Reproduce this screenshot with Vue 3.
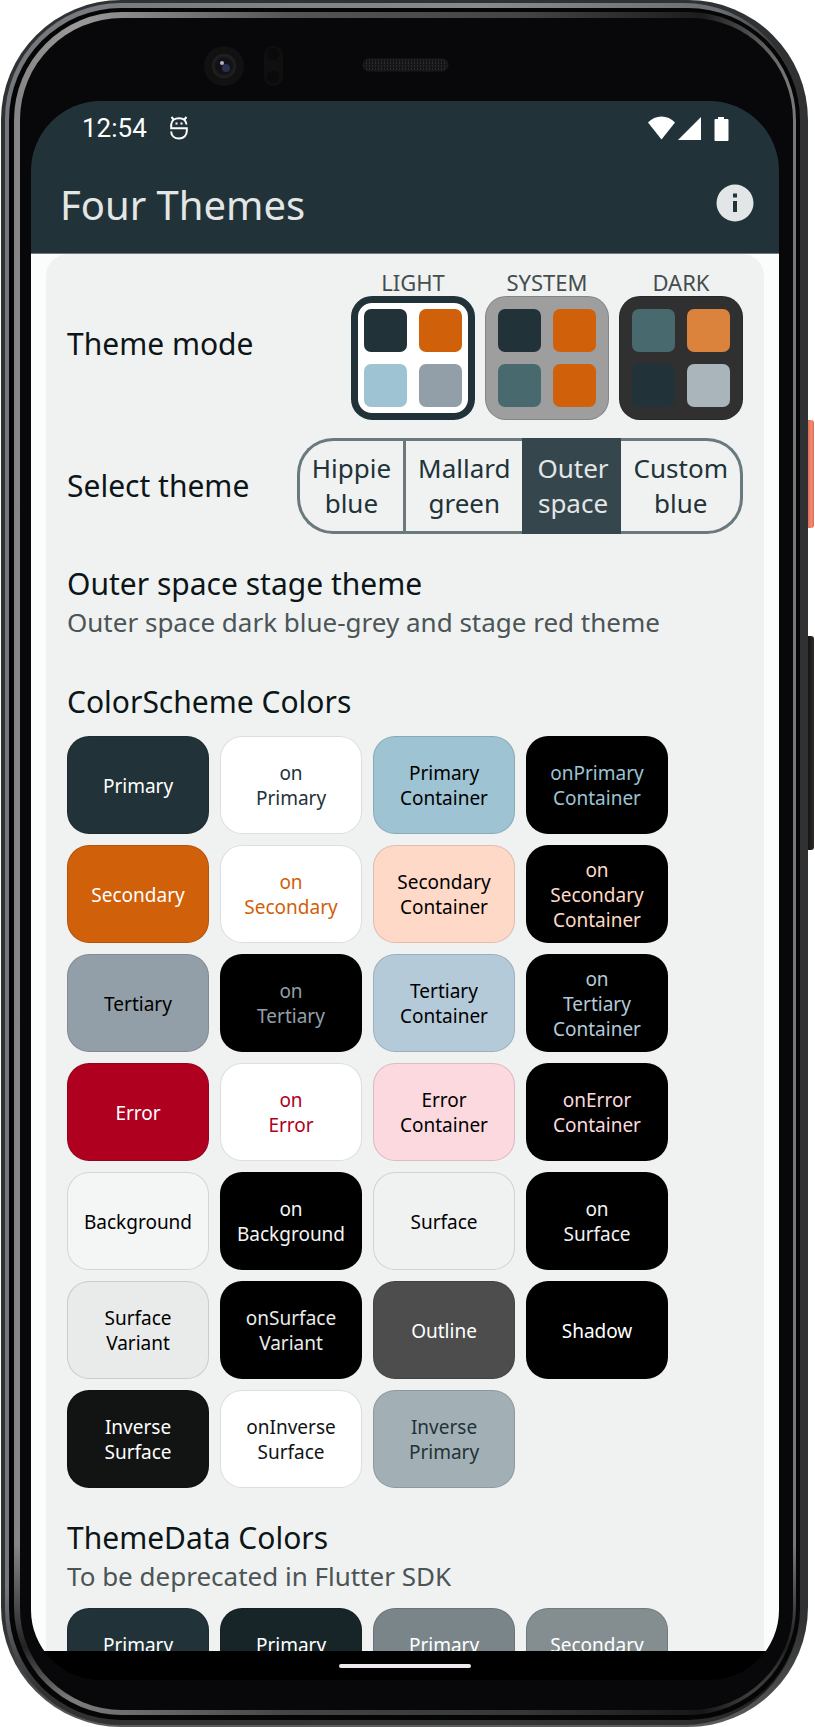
<script setup>
import { ref } from 'vue'

const modes = [
  { id: 'light', label: 'LIGHT', swatches: ['#213338', '#d0600a', '#9ec3d3', '#939fa8'] },
  { id: 'system', label: 'SYSTEM', swatches: ['#213338', '#d0600a', '#486a6f', '#d0600a'] },
  { id: 'dark', label: 'DARK', swatches: ['#486a6f', '#db823d', '#213338', '#a9b4bb'] }
]
const mode = ref('light')

const themes = [
  ['Hippie', 'blue'],
  ['Mallard', 'green'],
  ['Outer', 'space'],
  ['Custom', 'blue']
]
const theme = ref(2)

const schemeColors = [
  { lines: ['Primary'], bg: '#213338', fg: '#ffffff' },
  { lines: ['on', 'Primary'], bg: '#ffffff', fg: '#213338' },
  { lines: ['Primary', 'Container'], bg: '#9ec3d3', fg: '#000000' },
  { lines: ['onPrimary', 'Container'], bg: '#000000', fg: '#9ec3d3' },
  { lines: ['Secondary'], bg: '#d0600a', fg: '#ffffff' },
  { lines: ['on', 'Secondary'], bg: '#ffffff', fg: '#d0600a' },
  { lines: ['Secondary', 'Container'], bg: '#ffd9c7', fg: '#000000' },
  { lines: ['on', 'Secondary', 'Container'], bg: '#000000', fg: '#ffd9c7' },
  { lines: ['Tertiary'], bg: '#939fa8', fg: '#000000' },
  { lines: ['on', 'Tertiary'], bg: '#000000', fg: '#939fa8' },
  { lines: ['Tertiary', 'Container'], bg: '#b4cad8', fg: '#000000' },
  { lines: ['on', 'Tertiary', 'Container'], bg: '#000000', fg: '#b4cad8' },
  { lines: ['Error'], bg: '#b00020', fg: '#ffffff' },
  { lines: ['on', 'Error'], bg: '#ffffff', fg: '#b00020' },
  { lines: ['Error', 'Container'], bg: '#fcd8df', fg: '#000000' },
  { lines: ['onError', 'Container'], bg: '#000000', fg: '#fcd8df' },
  { lines: ['Background'], bg: '#f4f6f5', fg: '#000000' },
  { lines: ['on', 'Background'], bg: '#000000', fg: '#f4f6f5' },
  { lines: ['Surface'], bg: '#f0f2f1', fg: '#000000' },
  { lines: ['on', 'Surface'], bg: '#000000', fg: '#f0f2f1' },
  { lines: ['Surface', 'Variant'], bg: '#e9ebea', fg: '#000000' },
  { lines: ['onSurface', 'Variant'], bg: '#000000', fg: '#e9ebea' },
  { lines: ['Outline'], bg: '#4d4d4d', fg: '#ffffff' },
  { lines: ['Shadow'], bg: '#000000', fg: '#ffffff' },
  { lines: ['Inverse', 'Surface'], bg: '#111413', fg: '#ffffff' },
  { lines: ['onInverse', 'Surface'], bg: '#ffffff', fg: '#111413' },
  { lines: ['Inverse', 'Primary'], bg: '#a2b0b5', fg: '#213338' }
]

const themeDataColors = [
  { lines: ['Primary', 'Color'], bg: '#213338', fg: '#ffffff' },
  { lines: ['Primary', 'Dark'], bg: '#172428', fg: '#ffffff' },
  { lines: ['Primary', 'Light'], bg: '#7a858a', fg: '#ffffff' },
  { lines: ['Secondary', 'Header'], bg: '#848e90', fg: '#ffffff' }
]
</script>

<template>
  <div class="device">
    <div class="side-key power"></div>
    <div class="side-key volume"></div>
    <div class="shell"><div class="rim"><div class="groove"><div class="ring"><div class="glass">
      <div class="sensors">
        <svg width="250" height="48" viewBox="0 0 250 48" aria-hidden="true">
          <defs>
            <radialGradient id="lens"><stop offset="0" stop-color="#10101a" /><stop offset=".6" stop-color="#111116" /><stop offset="1" stop-color="#242424" /></radialGradient>
            <pattern id="mesh" width="3" height="3" patternUnits="userSpaceOnUse"><rect width="3" height="3" fill="#151515" /><path d="M0 0h1v2h-1z" fill="#2c2c2c" /></pattern>
          </defs>
          <circle cx="20" cy="25" r="20" fill="#111112" />
          <circle cx="20" cy="25" r="12" fill="url(#lens)" />
          <circle cx="22" cy="27" r="4" fill="#29304e" />
          <circle cx="18" cy="22" r="2" fill="#b5b5bd" />
          <rect x="60" y="5" width="19" height="40" rx="9" fill="#0f0f10" />
          <circle cx="69" cy="13" r="7" fill="#0a0a0b" stroke="#121213" />
          <circle cx="69" cy="36" r="7" fill="#0a0a0b" stroke="#121213" />
          <rect x="159" y="18" width="85" height="12" rx="6" fill="url(#mesh)" stroke="#1a1a1a" />
        </svg>
      </div>

      <div class="screen">
        <header class="top">
          <div class="status">
            <span class="clock">12:54</span>
            <svg class="debug" width="18" height="24" viewBox="0 0 18 24" aria-hidden="true" fill="none" stroke="#fff" stroke-width="2">
              <path d="M16.500 8.500C16 4.500 13 2.200 9 2.200S1.500 4.500 1.200 8.500V12.200H16.800V15c0 4.500-3.300 7.500-7.800 7.500S1.200 19.700 1.200 15.500" />
              <path d="M1.500 1l2.500 3M16.500 1L14 4" />
              <path d="M5.500 7.500h2M10.500 7.500h2" />
            </svg>
            <span class="grow"></span>
            <svg class="signals" width="81" height="25" viewBox="0 0 81 25" aria-hidden="true" fill="#fff">
              <path d="M0 6.500C7-1.500 20-1.500 27 6.500L13.500 23.500z" />
              <path d="M53 1v23H30z" />
              <path d="M70 1h6v2h3.500q1 0 1 1v20q0 1-1 1h-12q-1 0-1-1V4q0-1 1-1H70z" />
            </svg>
          </div>
          <div class="appbar">
            <h1>Four Themes</h1>
            <button class="info" type="button" aria-label="About">
              <svg width="38" height="38" viewBox="0 0 38 38" aria-hidden="true">
                <circle cx="19" cy="19" r="18.500" fill="#e3e6e7" />
                <path d="M17 9.500h4v4h-4zM17 17h4v11h-4z" fill="#213338" />
              </svg>
            </button>
          </div>
        </header>

        <main class="body">
          <section class="card">
            <div class="row mode-row">
              <h2>Theme mode</h2>
              <div class="modes">
                <div v-for="m in modes" :key="m.id" class="mode">
                  <label :for="'mode-' + m.id">{{ m.label }}</label>
                  <button
                    :id="'mode-' + m.id"
                    type="button"
                    :class="['mode-box', m.id, { selected: mode === m.id }]"
                    :aria-pressed="mode === m.id"
                    @click="mode = m.id"
                  >
                    <span v-for="(c, i) in m.swatches" :key="i" class="swatch" :style="{ background: c }"></span>
                  </button>
                </div>
              </div>
            </div>

            <div class="row theme-row">
              <h2>Select theme</h2>
              <div class="segments">
                <button
                  v-for="(t, i) in themes"
                  :key="i"
                  type="button"
                  :class="{ active: theme === i }"
                  :aria-pressed="theme === i"
                  @click="theme = i"
                >{{ t[0] }}<br />{{ t[1] }}</button>
              </div>
            </div>

            <div class="heading">
              <h2>Outer space stage theme</h2>
              <p>Outer space dark blue-grey and stage red theme</p>
            </div>

            <h2 class="section-title">ColorScheme Colors</h2>
            <div class="tiles">
              <div v-for="(c, i) in schemeColors" :key="i" class="tile" :style="{ background: c.bg, color: c.fg }">
                <span v-for="(l, j) in c.lines" :key="j">{{ l }}</span>
              </div>
            </div>

            <div class="heading data-heading">
              <h2>ThemeData Colors</h2>
              <p>To be deprecated in Flutter SDK</p>
            </div>
            <div class="tiles">
              <div v-for="(c, i) in themeDataColors" :key="i" class="tile" :style="{ background: c.bg, color: c.fg }">
                <span v-for="(l, j) in c.lines" :key="j">{{ l }}</span>
              </div>
            </div>
          </section>
        </main>

        <footer class="nav"><span class="pill"></span></footer>
      </div>
    </div></div></div></div></div>
  </div>
</template>

<style>
html, body { background: #fff; }
</style>

<style scoped>
* { box-sizing: border-box; }
h1, h2, p { margin: 0; font-weight: 400; }
button { font: inherit; color: inherit; margin: 0; cursor: pointer; }
.device {
  position: relative;
  display: flex;
  height: 100vh;
  padding: 0 7px 0 1px;
  font-family: "Noto Sans", "Open Sans", sans-serif;
}
.side-key { position: absolute; right: 1px; width: 8px; }
.power { top: 420px; height: 108px; border-radius: 0 3px 3px 0; background: linear-gradient(90deg, #d95f47, #f58a72 70%, #d96a55); }
.volume { top: 636px; height: 214px; border-radius: 0 3px 3px 0; background: linear-gradient(90deg, #0d0d0d, #2d2b2a); }
.shell, .rim, .groove, .ring, .glass { display: flex; flex: 1; min-width: 0; min-height: 0; }
.shell {
  position: relative;
  padding: 3px 8px 2px 4px;
  border-radius: 120px;
  background: linear-gradient(180deg, #2f3132 94%, #5c5c5c);
}
.rim {
  padding: 5px 0 5px 4px;
  border-radius: 116px;
  background:
    linear-gradient(180deg, transparent 92%, rgba(0, 0, 0, 0.6) 98%),
    linear-gradient(90deg, #74777c, #858b8f 60%, #6a6e71 90%, #2a2c2d);
}
.groove { padding: 4px 4px 5px 5px; border-radius: 112px; background: #050506; }
.ring {
  padding: 6px 3px 5px 6px;
  border-radius: 108px;
  background:
    linear-gradient(180deg, transparent 90%, rgba(0, 0, 0, 0.75) 96%, rgba(0, 0, 0, 0.2) 99%),
    linear-gradient(90deg, #858585 0, #9a9a9a 8%, #555 35%, #444 65%, #1c1c1c 88%, #777 99%);
}
.glass { flex-direction: column; padding: 0 14px 30px 11px; border-radius: 102px; background: #08080a; }
.sensors { display: flex; align-items: center; height: 83px; padding: 10px 0 0 173px; }
.screen {
  display: flex;
  flex: 1;
  flex-direction: column;
  min-height: 0;
  overflow: hidden;
  border-radius: 70px;
}
.top { background: #213338; color: #e3e6e7; border-bottom: 1px solid #6f7b7f; }
.status { display: flex; align-items: center; height: 52px; padding: 2px 50px 0 51px; color: #fff; }
.clock { font-family: Roboto, sans-serif; font-size: 26px; line-height: 30px; }
.debug { margin-left: 23px; }
.grow { flex: 1; }
.appbar { display: flex; align-items: center; justify-content: space-between; height: 100px; padding: 0 25px 0 29px; }
.appbar h1 { padding-top: 4px; font-size: 40px; line-height: 54px; }
.info { display: flex; padding: 0; border: 0; background: none; }
.body { flex: 1; min-height: 0; overflow: hidden; padding: 0 15px; background: #fafdfc; }
.card { padding: 15px 21px 22px; border-radius: 22px; background: #f0f2f1; }
h2 { color: #0c1517; font-size: 30px; line-height: 40px; }
.row { display: flex; align-items: center; justify-content: space-between; }
.mode-row { min-height: 151px; }
.mode-row h2 { padding-bottom: 2px; }
.modes { display: flex; gap: 10px; }
.mode { display: flex; flex-direction: column; align-items: center; }
.mode label { color: #454d4f; font-size: 22px; line-height: 27px; }
.mode-box {
  display: grid;
  grid-template-columns: 43px 43px;
  gap: 12px;
  padding: 12px;
  border: 1px solid rgba(0, 0, 0, 0.16);
  border-radius: 21px;
}
.mode-box.light { background: #fff; }
.mode-box.system { background: #9e9e9e; }
.mode-box.dark { background: #303030; }
.mode-box.selected { padding: 6px; border: 7px solid #213338; }
.swatch { height: 43px; border-radius: 7px; }
.theme-row { margin-top: 18px; }
.segments { display: flex; }
.segments button {
  padding: 10px 12px;
  border: solid #6a797d;
  border-width: 3px 0 3px 3px;
  background: #f0f2f1;
  color: #213338;
  font-size: 26px;
  line-height: 35px;
}
.segments button:first-child { border-radius: 36px 0 0 36px; }
.segments button:last-child { border-right-width: 3px; border-radius: 0 36px 36px 0; }
.segments button.active { border-color: #35474c; background: #35474c; color: #e3e6e7; }
.segments button.active + button { border-left-width: 0; padding-left: 13px; }
.heading { margin-top: 30px; }
.heading p { color: #4b5456; font-size: 26px; line-height: 36px; }
.section-title { margin-top: 42px; }
.tiles { display: flex; flex-wrap: wrap; gap: 11px; margin-top: 14px; }
.tile {
  display: flex;
  flex-direction: column;
  align-items: center;
  justify-content: center;
  width: 142px;
  height: 98px;
  padding-top: 2px;
  border: 1px solid rgba(0, 0, 0, 0.13);
  border-radius: 22px;
  font-size: 19px;
  line-height: 25px;
}
.nav { display: flex; align-items: center; justify-content: center; height: 29px; background: #000; }
.pill { width: 132px; height: 4px; border-radius: 2px; background: #eee9ee; }
</style>
